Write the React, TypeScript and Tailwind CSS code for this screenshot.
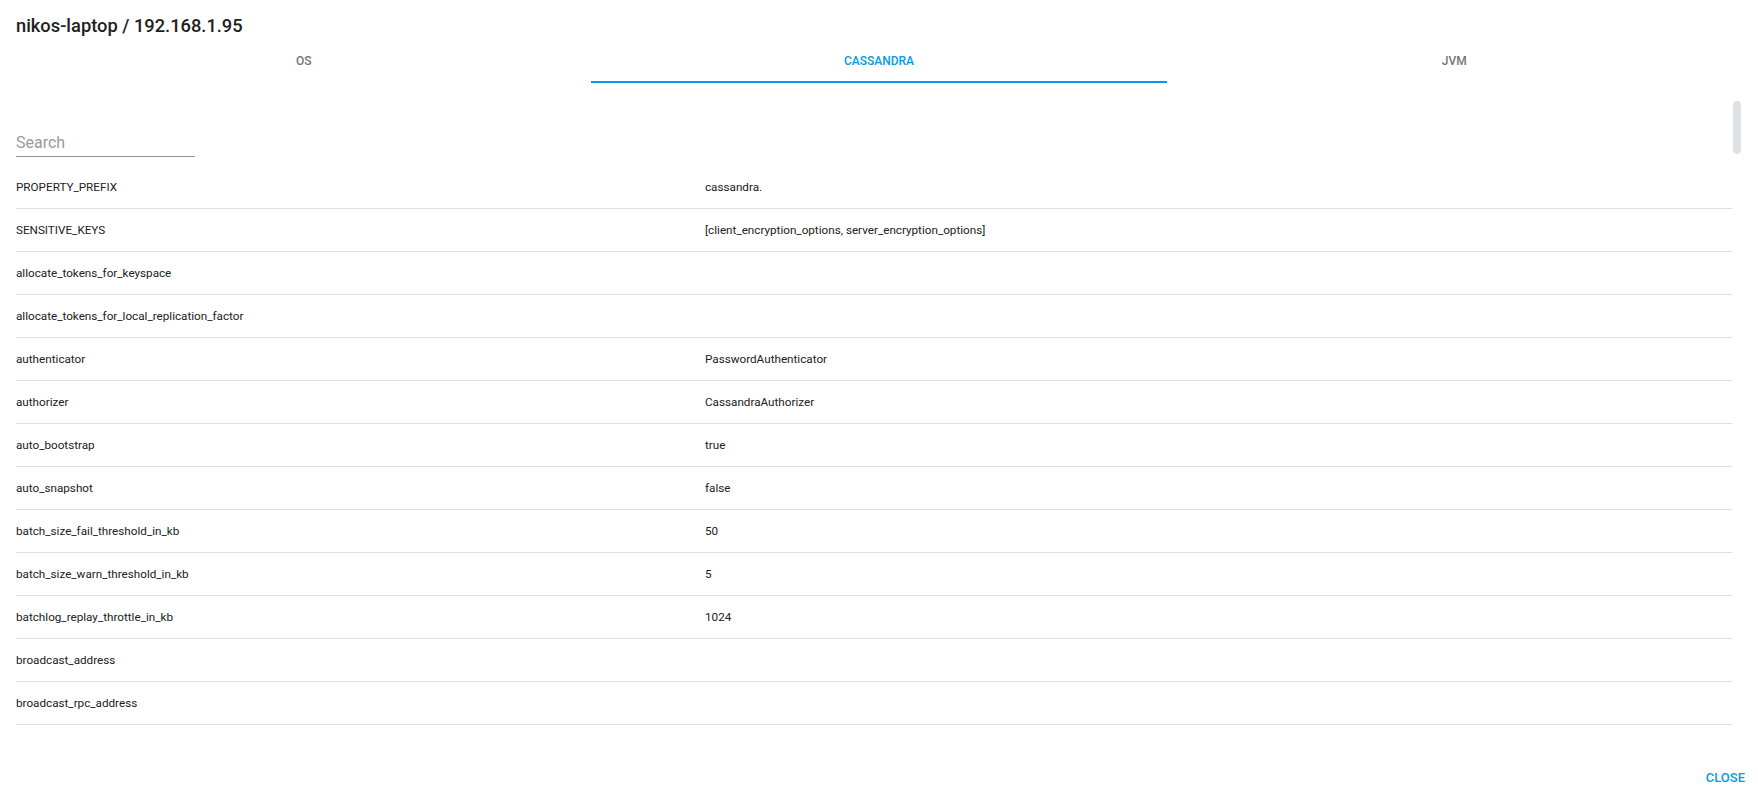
import { useState } from "react";

const rows: [string, string][] = [
  ["PROPERTY_PREFIX", "cassandra."],
  ["SENSITIVE_KEYS", "[client_encryption_options, server_encryption_options]"],
  ["allocate_tokens_for_keyspace", ""],
  ["allocate_tokens_for_local_replication_factor", ""],
  ["authenticator", "PasswordAuthenticator"],
  ["authorizer", "CassandraAuthorizer"],
  ["auto_bootstrap", "true"],
  ["auto_snapshot", "false"],
  ["batch_size_fail_threshold_in_kb", "50"],
  ["batch_size_warn_threshold_in_kb", "5"],
  ["batchlog_replay_throttle_in_kb", "1024"],
  ["broadcast_address", ""],
  ["broadcast_rpc_address", ""],
];

const tabs = ["OS", "CASSANDRA", "JVM"];

export default function App() {
  const [tab, setTab] = useState(1);
  const [query, setQuery] = useState("");

  const filtered = rows.filter(([k]) => k.toLowerCase().includes(query.toLowerCase()));

  return (
    <div className="flex h-[793px] w-full flex-col bg-white font-['Roboto',sans-serif] text-[#212121]">
      <h2 className="h-[40px] px-4 pt-[12px] text-[18.3px] font-medium leading-[28px]">nikos-laptop / 192.168.1.95</h2>

      <div className="mx-4 grid h-[43px] grid-cols-3">
        {tabs.map((t, i) => (
          <button
            key={t}
            onClick={() => setTab(i)}
            className={`flex items-center justify-center border-b-2 text-[12px] font-medium ${
              i === tab ? "border-[#039be5] text-[#039be5]" : "border-transparent text-[#757575]"
            }`}
          >
            {t}
          </button>
        ))}
      </div>

      <div className="relative ml-4 mt-[18px] h-[626px] w-[1725px] overflow-hidden pr-[9px]">
        <div className="mb-[9px] w-[179px] border-b border-[#949494] pb-[4px] pt-[32px]">
          <input
            value={query}
            onChange={(e) => setQuery(e.target.value)}
            placeholder="Search"
            className="block w-full bg-transparent text-[16px] leading-[19px] outline-none placeholder:text-[#9a9a9a]"
          />
        </div>
        {filtered.map(([k, v]) => (
          <div key={k} className="flex h-[43px] items-center border-b border-[#e0e0e0] pt-[2px] text-[11.7px]">
            <div className="w-[689px] shrink-0">{k}</div>
            <div>{v}</div>
          </div>
        ))}
        {/* scrollbar thumb */}
        <div className="absolute right-0 top-0 h-[53px] w-2 rounded bg-[#dfe2e4]" />
      </div>

      <div className="flex flex-1 items-end justify-end pb-[5px] pr-[13px]">
        <button className="text-[13px] font-medium leading-[20px] text-[#039be5]">CLOSE</button>
      </div>
    </div>
  );
}
